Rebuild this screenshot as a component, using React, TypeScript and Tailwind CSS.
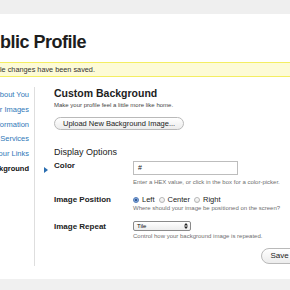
import React from 'react';

const sideLinks = ['About You', 'Your Images', 'Information', 'Services', 'Your Links'];

const Radio = ({ checked }: { checked?: boolean }) =>
	checked ? (
		<span className="w-[6px] h-[6px] rounded-full border border-[#5a7fb8] bg-[#7fa7dd] flex items-center justify-center">
			<span className="w-[2px] h-[2px] rounded-full bg-[#1f3f78]" />
		</span>
	) : (
		<span className="w-[6px] h-[6px] rounded-full border border-[#b5b5b5] bg-gradient-to-b from-white to-[#e6e6e6]" />
	);

const App: React.FC = () => {
	return (
		<div className="w-[290px] h-[290px] overflow-hidden bg-white font-['Liberation_Sans',Arial,sans-serif] text-[#222]">
			{/* top strip */}
			<div className="h-[14px] bg-[#efefef]" />

			<div className="h-[265px] overflow-hidden">
				<div className="-ml-[22px] w-[420px]">
					<h1 className="mt-[19px] text-[18px] leading-[18px] font-bold tracking-[-0.5px] text-[#1d1d1d] whitespace-nowrap">
						Public Profile
					</h1>

					{/* saved message */}
					<div className="mt-[11px] h-[15px] border-y border-[#f4ee62] bg-[#fdfbd6] pl-[7px] text-[7.3px] leading-[13px] text-[#333] whitespace-nowrap">
						Profile changes have been saved.
					</div>

					<div className="mt-[10px] flex h-[179px]">
						{/* sidebar */}
						<div className="w-[57px] shrink-0 overflow-hidden border-r border-[#dedede] pr-[5px] pt-[1px] text-right text-[7.5px] leading-[14.8px] whitespace-nowrap">
							{sideLinks.map((l) => (
								<div key={l} className="text-[#2f78b8]">{l}</div>
							))}
							<div className="font-bold text-[#111]">Background</div>
						</div>

						{/* main */}
						<div className="relative w-[298px] shrink-0 pl-[19px]">
							<svg className="absolute left-[9px] top-[80px]" width="4" height="6" viewBox="0 0 4 6">
								<path d="M0 0 L4 3 L0 6 Z" fill="#2a6db0" />
							</svg>

							<h2 className="text-[10.5px] leading-[12px] font-bold text-[#1d1d1d]">Custom Background</h2>
							<p className="mt-[2px] text-[6px] leading-[8px] text-[#444]">Make your profile feel a little more like home.</p>

							<button className="mt-[7px] h-[13px] px-[8px] rounded-full border border-[#b9b9b9] bg-gradient-to-b from-white to-[#ececec] text-[7.5px] leading-[11px] text-[#222] whitespace-nowrap">
								Upload New Background Image...
							</button>

							<h3 className="mt-[14px] text-[9px] leading-[11px] text-[#222]">Display Options</h3>

							{/* Color */}
							<div className="mt-[3px] flex">
								<div className="w-[79px] shrink-0 text-[8px] leading-[10px] font-bold text-[#222]">Color</div>
								<div>
									<div className="w-[105px] h-[14px] border border-[#bdbdbd] pl-[4px] text-[7px] leading-[12px] text-[#222]">#</div>
									<p className="mt-[3px] text-[6px] leading-[8px] text-[#6f6f6f] whitespace-nowrap">
										Enter a HEX value, or click in the box for a color-picker.
									</p>
								</div>
							</div>

							{/* Image Position */}
							<div className="mt-[9px] flex">
								<div className="w-[79px] shrink-0 text-[8px] leading-[10px] font-bold text-[#222]">Image Position</div>
								<div>
									<div className="flex h-[10px] items-center text-[7.5px] font-medium text-[#222]">
										<Radio checked />
										<span className="ml-[3px] mr-[4px]">Left</span>
										<Radio />
										<span className="ml-[3px] mr-[4px]">Center</span>
										<Radio />
										<span className="ml-[3px]">Right</span>
									</div>
									<p className="-mt-[1px] text-[6px] leading-[8px] text-[#6f6f6f] whitespace-nowrap">
										Where should your image be positioned on the screen?
									</p>
								</div>
							</div>

							{/* Image Repeat */}
							<div className="mt-[9px] flex">
								<div className="w-[79px] shrink-0 mt-[1px] text-[8px] leading-[10px] font-bold text-[#222]">Image Repeat</div>
								<div>
									<div className="w-[58px] h-[10px] flex items-center justify-between rounded-[2px] border border-[#8a8a8a] bg-gradient-to-b from-white to-[#ededed] pl-[3px] pr-[2px] text-[6px] text-[#111]">
										<span>Tile</span>
										<svg width="4" height="6" viewBox="0 0 4 6">
											<path d="M0 2.4 L2 0 L4 2.4 Z M0 3.6 L2 6 L4 3.6 Z" fill="#222" />
										</svg>
									</div>
									<p className="mt-[1px] text-[6px] leading-[8px] text-[#6f6f6f] whitespace-nowrap">
										Control how your background image is repeated.
									</p>
								</div>
							</div>

							<div className="mt-[8px] flex justify-end">
								<button className="h-[16px] px-[9px] rounded-full border border-[#b9b9b9] bg-gradient-to-b from-white to-[#ececec] text-[8px] leading-[14px] text-[#222] whitespace-nowrap">
									Save Changes
								</button>
							</div>
						</div>
					</div>
				</div>
			</div>

			{/* bottom strip */}
			<div className="h-[11px] bg-[#f0f0f0]" />
		</div>
	);
};

export default App;
